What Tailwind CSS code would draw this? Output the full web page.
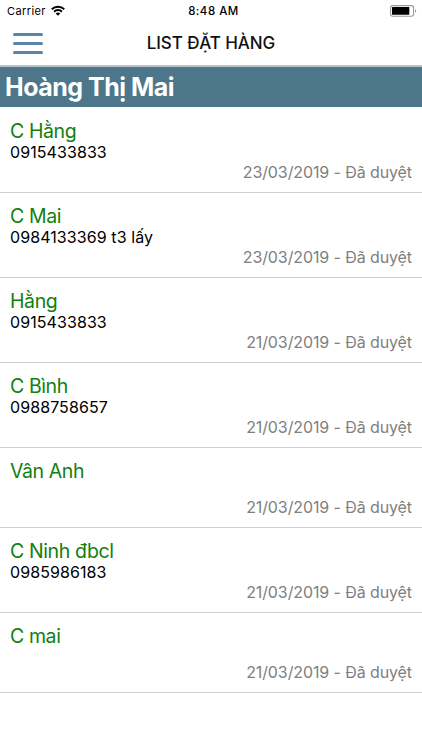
<!DOCTYPE html>
<html lang="vi">
<head>
<meta charset="utf-8">
<title>List đặt hàng</title>
<script src="https://cdn.jsdelivr.net/npm/@tailwindcss/browser@4"></script>
</head>
<body class="bg-white text-black font-['Inter','Liberation_Sans',sans-serif]">

<div class="h-screen overflow-hidden">

<!-- status bar -->
<div class="h-[22px] grid grid-cols-3 items-center pl-[7px] pr-[5px] text-[11px] leading-[22px]">
    <div class="flex items-center gap-[5px]">
        <span class="tracking-[0.4px]">Carrier</span>
        <svg class="w-[14px] h-[11px] -mt-[1px]" viewBox="0 0 14 11" fill="none" stroke="#000" stroke-width="2">
            <path d="M.8 4.2a8.8 8.8 0 0 1 12.4 0"/>
            <path d="M3.1 6.7a5.5 5.5 0 0 1 7.8 0"/>
            <path d="M4.7 8.5a3.3 3.3 0 0 1 4.6 0L7 10.8z" fill="#000" stroke="none"/>
        </svg>
    </div>
    <span class="pl-[3px] text-center text-[11.5px] font-medium tracking-[0.5px]">8:48 AM</span>
    <svg class="w-[27px] h-[12px] -mt-[1px] justify-self-end" viewBox="0 0 27 12">
        <rect x=".6" y=".6" width="23" height="10.6" rx="2.2" fill="#fff" stroke="#999" stroke-width="1.1"/>
        <rect x="2" y="2" width="17.3" height="7.8" rx=".6" fill="#000"/>
        <path d="M25 4.2c1.7.6 1.7 2.8 0 3.4z" fill="#999"/>
    </svg>
</div>

<!-- nav bar -->
<div class="h-[45px] grid grid-cols-[44px_1fr_44px] items-center border-b-2 border-[#b4c3cb]">
    <div class="ml-[13px] w-[30px] flex flex-col gap-[6px]">
        <div class="h-[3px] rounded-full bg-[#5a84a9]"></div>
        <div class="h-[3px] rounded-full bg-[#5a84a9]"></div>
        <div class="h-[3px] rounded-full bg-[#5a84a9]"></div>
    </div>
    <h1 class="-mt-[1px] text-center text-[17px] leading-[22px] tracking-[-0.1px] font-medium text-[#111]">LIST ĐẶT HÀNG</h1>
</div>

<div class="h-10 bg-[#4d768b] pl-[5px] text-[25px] leading-[40px] tracking-[-0.5px] font-bold text-white">Hoàng Thị Mai</div>

<ul id="orders" class="pt-[1px]"></ul>

</div>

<script>
const orders = [
    { name: 'C Hằng', note: '0915433833', date: '23/03/2019' },
    { name: 'C Mai', note: '0984133369 t3 lấy', date: '23/03/2019' },
    { name: 'Hằng', note: '0915433833', date: '21/03/2019' },
    { name: 'C Bình', note: '0988758657', date: '21/03/2019' },
    { name: 'Vân Anh', note: '', date: '21/03/2019' },
    { name: 'C Ninh đbcl', note: '0985986183', date: '21/03/2019' },
    { name: 'C mai', note: '', date: '21/03/2019' }
]

const list = document.getElementById('orders')
orders.forEach(o => {
    list.innerHTML += `
    <li class="pt-[12px] pb-[10px] px-[10px] border-b border-[#cfcfcf]">
        <div class="text-[19.5px] leading-[22px] tracking-[-0.4px] text-[#108010]">${o.name}</div>
        ${o.note ? `<div class="text-[16px] leading-5 tracking-[0.08px]">${o.note}</div>` : '<div class="h-[15px]"></div>'}
        <div class="text-right text-[16px] leading-5 tracking-[-0.1px] text-[#808080]">${o.date} - Đã duyệt</div>
    </li>`
})
</script>

</body>
</html>
